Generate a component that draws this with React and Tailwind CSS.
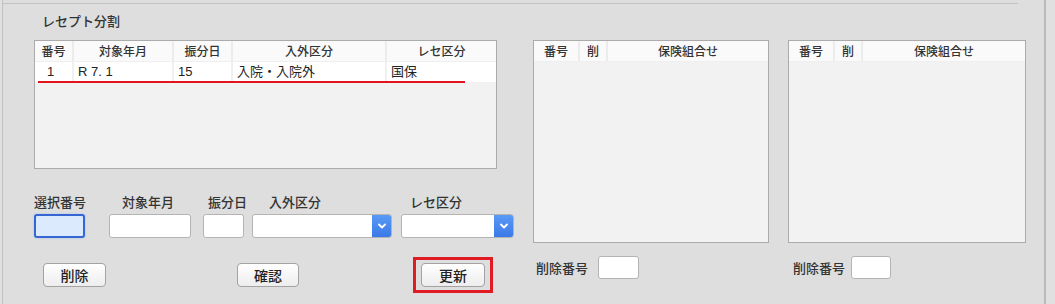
import React from "react";

const font = { fontFamily: '"Noto Sans CJK JP", "Noto Sans", sans-serif' };
const dataFont = {
  fontFamily: '"Liberation Sans", "Noto Sans CJK JP", sans-serif',
};

const Chevron = () => (
  <svg width="8" height="6" viewBox="0 0 8 6">
    <polyline
      points="1,1.5 4,4.5 7,1.5"
      fill="none"
      stroke="white"
      strokeWidth="1.8"
      strokeLinecap="round"
      strokeLinejoin="round"
    />
  </svg>
);

const Select = ({ width }) => (
  <div
    className={`flex h-[24px] rounded-[3px] border border-[#b4b4b4] bg-white overflow-hidden ${width}`}
  >
    <div className="flex-1" />
    <div className="w-[20px] -my-px -mr-px rounded-r-[3px] bg-gradient-to-b from-[#5a9bf7] to-[#3a78e6] flex items-center justify-center">
      <Chevron />
    </div>
  </div>
);

const Button = ({ label, width }) => (
  <button
    className={`h-[24px] ${width} rounded-[4px] border border-[#a3a3a3] bg-gradient-to-b from-white to-[#ededed] text-[14px] text-[#222] font-medium leading-none flex items-center justify-center`}
  >
    {label}
  </button>
);

const TextBox = ({ width, height = "h-[24px]" }) => (
  <div
    className={`${height} ${width} rounded-[3px] border border-[#b4b4b4] bg-white`}
  />
);

const Header = ({ cols }) => (
  <div className="flex h-[21px] bg-[#fafafa] border-b border-[#efefef]">
    {cols.map((c, i) => (
      <div
        key={i}
        className={`${c.w} flex items-center justify-center text-[12px] font-medium text-[#333] ${
          i < cols.length - 1 ? "border-r-2 border-[#ececec]" : ""
        }`}
      >
        {c.label}
      </div>
    ))}
  </div>
);

const InsuranceTable = ({ width }) => (
  <div className={`h-[203px] ${width} border border-[#ababab] bg-[#f2f2f2]`}>
    <Header
      cols={[
        { label: "番号", w: "w-[46px]" },
        { label: "削", w: "w-[28px]" },
        { label: "保険組合せ", w: "flex-1" },
      ]}
    />
  </div>
);

export default function App() {
  const receiptCols = [
    { label: "番号", w: "w-[39px]" },
    { label: "対象年月", w: "w-[100px]" },
    { label: "振分日", w: "w-[59px]" },
    { label: "入外区分", w: "w-[154px]" },
    { label: "レセ区分", w: "flex-1" },
  ];

  return (
    <div
      className="w-[1055px] h-[304px] bg-[#e0e0e0] flex overflow-hidden"
      style={font}
    >
      <div className="w-[2px] shrink-0" />
      <div className="w-[1044px] shrink-0 h-full bg-[#dedede] border-l border-r-2 border-l-[#c2c2c2] border-r-[#bababa]">
        <div className="mt-[3px] h-px w-[1015px] bg-[#c2c2c2]" />

        <div className="ml-[39px] mt-[8px] h-[18px] leading-[18px] text-[13px] font-medium text-[#333]">
          レセプト分割
        </div>

        <div className="flex ml-[31px] mt-[10px]">
          {/* left column */}
          <div className="w-[480px] flex flex-col">
            <div className="relative h-[129px] w-[463px] border border-[#ababab] bg-[#f2f2f2]">
              <Header cols={receiptCols} />
              <div
                className="flex h-[20px] bg-white text-[13px] text-[#222] leading-[20px]"
                style={dataFont}
              >
                <div className="w-[39px] pl-[12px] border-r-2 border-[#f0f0f0]">1</div>
                <div className="w-[100px] pl-[4px] border-r-2 border-[#f0f0f0]">R 7. 1</div>
                <div className="w-[59px] pl-[4px] border-r-2 border-[#f0f0f0]">15</div>
                <div className="w-[154px] pl-[4px] border-r-2 border-[#f0f0f0]">入院・入院外</div>
                <div className="flex-1 pl-[4px]">国保</div>
              </div>
              <div className="absolute left-[3px] top-[40px] w-[427px] h-[2px] bg-[#e2141e]" />
            </div>

            <div className="flex mt-[24px] h-[18px] leading-[18px] text-[13px] font-medium text-[#333]">
              <div className="w-[52px]">選択番号</div>
              <div className="ml-[36px] w-[52px]">対象年月</div>
              <div className="ml-[34px] w-[39px]">振分日</div>
              <div className="ml-[22px] w-[52px]">入外区分</div>
              <div className="ml-[89px] w-[52px]">レセ区分</div>
            </div>

            <div className="flex mt-[3px] items-center">
              <div className="h-[24px] w-[51px] rounded-[3px] border-2 border-[#3566d2] bg-[#dceafd] shadow-[0_0_2px_#9dbdf5]" />
              <div className="ml-[24px]">
                <TextBox width="w-[82px]" />
              </div>
              <div className="ml-[12px]">
                <TextBox width="w-[41px]" />
              </div>
              <div className="ml-[8px]">
                <Select width="w-[140px]" />
              </div>
              <div className="ml-[9px]">
                <Select width="w-[113px]" />
              </div>
            </div>

            <div className="flex mt-[19px] items-center">
              <div className="ml-[9px]">
                <Button label="削除" width="w-[63px]" />
              </div>
              <div className="ml-[131px]">
                <Button label="確認" width="w-[62px]" />
              </div>
              <div className="ml-[114px] w-[80px] h-[36px] border-[3px] border-[#e01b24] flex items-center justify-center">
                <Button label="更新" width="w-[64px]" />
              </div>
            </div>
          </div>

          {/* middle column */}
          <div className="ml-[19px] flex flex-col">
            <InsuranceTable width="w-[236px]" />
            <div className="flex items-center mt-[13px]">
              <div className="ml-[3px] w-[52px] text-[13px] font-medium text-[#333]">削除番号</div>
              <div className="ml-[10px]">
                <TextBox width="w-[41px]" height="h-[23px]" />
              </div>
            </div>
          </div>

          {/* right column */}
          <div className="ml-[19px] flex flex-col">
            <InsuranceTable width="w-[238px]" />
            <div className="flex items-center mt-[13px]">
              <div className="ml-[5px] w-[52px] text-[13px] font-medium text-[#333]">削除番号</div>
              <div className="ml-[6px]">
                <TextBox width="w-[40px]" height="h-[23px]" />
              </div>
            </div>
          </div>
        </div>
      </div>
    </div>
  );
}
